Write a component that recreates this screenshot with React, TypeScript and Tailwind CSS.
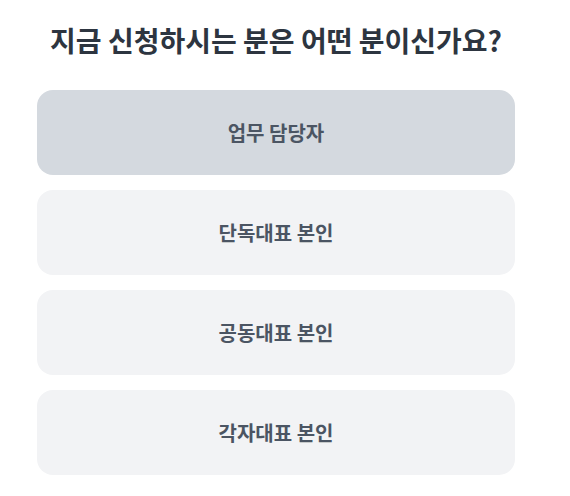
import React from "react";

const options = ["업무 담당자", "단독대표 본인", "공동대표 본인", "각자대표 본인"];

export default function App() {
  return (
    <div
      className="w-[570px] h-[496px] bg-white flex flex-col pt-6 pl-[37px]"
      style={{ fontFamily: '"Noto Sans CJK KR", "Noto Sans", sans-serif' }}
    >
      <div className="w-[478px] flex flex-col">
        <h1 className="text-[28px] leading-8 font-bold text-[#2d3540] text-center">
          지금 신청하시는 분은 어떤 분이신가요?
        </h1>
        <div className="mt-[34px] w-full flex flex-col gap-[15px]">
          {options.map((o, i) => (
            <button
              key={o}
              className={`h-[85px] w-full rounded-2xl flex items-center justify-center text-[20px] font-bold text-[#4b5563] ${
                i === 0 ? "bg-[#d4d9df]" : "bg-[#f2f3f5]"
              }`}
            >
              {o}
            </button>
          ))}
        </div>
      </div>
    </div>
  );
}
